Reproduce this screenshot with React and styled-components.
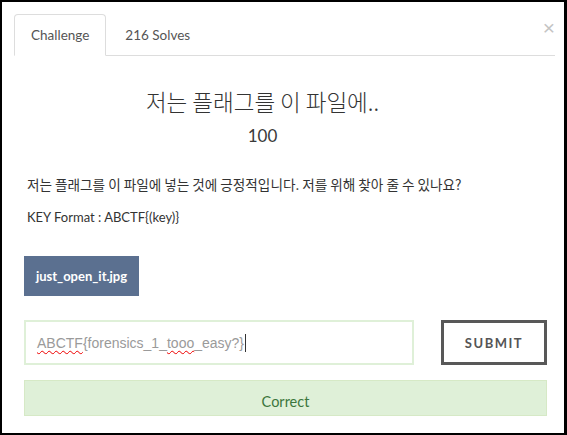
import styled, { createGlobalStyle } from 'styled-components';

const Global = createGlobalStyle`
  html, body {
    margin: 0;
    padding: 0;
    background: #000;
  }
  body {
    font-family: Lato, "Noto Sans CJK KR", sans-serif;
  }
`;

const Frame = styled.div`
  box-sizing: border-box;
  width: 567px;
  height: 435px;
  border-style: solid;
  border-color: #000;
  border-width: 2px 3px 2px 2px;
  background: #fff;
  padding: 12px 9px 0 12px;
`;

const TabBar = styled.div`
  position: relative;
  display: flex;
  align-items: flex-end;
  gap: 2px;
  border-bottom: 1px solid #ddd;
  height: 41px;
`;

const Tab = styled.div`
  box-sizing: border-box;
  height: ${(p) => (p.$active ? '42px' : '41px')};
  margin-bottom: ${(p) => (p.$active ? '-1px' : '0')};
  padding: 0 16px;
  display: flex;
  align-items: center;
  font-size: 13.5px;
  color: #555;
  background: #fff;
  border: 1px solid ${(p) => (p.$active ? '#ddd' : 'transparent')};
  border-bottom-color: ${(p) => (p.$active ? '#fff' : 'transparent')};
  border-radius: 4px 4px 0 0;
`;

const Close = styled.span`
  position: absolute;
  right: 0;
  top: 3px;
  font-family: "Liberation Sans", sans-serif;
  font-size: 21px;
  line-height: 1;
  color: #c4c4c4;
`;

const Body = styled.div`
  padding: 0 8px 0 10px;
`;

const Heading = styled.div`
  text-align: center;
  padding-right: 46px;
  padding-top: 30px;
`;

const Title = styled.h2`
  margin: 0;
  font-family: "Noto Sans CJK KR", sans-serif;
  font-weight: 300;
  font-size: 22.5px;
  line-height: 30px;
  color: #333;
`;

const Points = styled.div`
  margin-top: 9px;
  font-size: 17px;
  font-weight: 400;
  line-height: 22px;
  color: #3a3a3a;
`;

const Desc = styled.p`
  margin: 27px 0 0 3px;
  font-family: "Noto Sans CJK KR", sans-serif;
  font-size: 13.6px;
  line-height: 20px;
  color: #333;
`;

const Line = styled.p`
  margin: 13px 0 0 3px;
  font-size: 13px;
  line-height: 20px;
  color: #333;
`;

const FileButton = styled.div`
  display: flex;
  align-items: center;
  justify-content: center;
  margin-top: 29px;
  width: 115px;
  height: 40px;
  background: #5b7090;
  color: #fff;
  font-weight: 700;
  font-size: 13px;
`;

const FlagRow = styled.div`
  display: flex;
  gap: 27px;
  margin-top: 24px;
`;

const Field = styled.div`
  box-sizing: border-box;
  width: 390px;
  height: 45px;
  border: 2px solid #dff0d8;
  display: flex;
  align-items: center;
  padding-left: 11px;
  font-family: "Liberation Sans", Arial, sans-serif;
  font-size: 14px;
  color: #9a9a9a;
  white-space: pre;
`;

const Misspelled = styled.span`
  text-decoration: underline wavy #e00;
  text-decoration-thickness: 1px;
  text-underline-offset: 2px;
`;

const Caret = styled.span`
  display: inline-block;
  width: 1px;
  height: 18px;
  margin-left: 1px;
  background: #333;
`;

const Submit = styled.div`
  box-sizing: border-box;
  width: 106px;
  height: 45px;
  border: 3px solid #585858;
  display: flex;
  align-items: center;
  justify-content: center;
  color: #555;
  font-size: 13px;
  font-weight: 700;
  letter-spacing: 1.5px;
`;

const Alert = styled.div`
  box-sizing: border-box;
  margin-top: 15px;
  height: 36px;
  background: #dff0d8;
  border: 1px solid #d6e9c6;
  color: #3c763d;
  font-size: 14.5px;
  display: flex;
  align-items: center;
  justify-content: center;
  padding-top: 6px;
`;

export default function App() {
  return (
    <>
      <Global />
      <Frame>
        <TabBar>
          <Tab $active>Challenge</Tab>
          <Tab>216 Solves</Tab>
          <Close>×</Close>
        </TabBar>
        <Body>
          <Heading>
            <Title>저는 플래그를 이 파일에..</Title>
            <Points>100</Points>
          </Heading>
          <Desc>저는 플래그를 이 파일에 넣는 것에 긍정적입니다. 저를 위해 찾아 줄 수 있나요?</Desc>
          <Line>KEY Format : ABCTF{'{'}(key){'}'}</Line>
          <FileButton>just_open_it.jpg</FileButton>
          <FlagRow>
            <Field>
              <Misspelled>ABCTF</Misspelled>
              {'{forensics_1_'}
              <Misspelled>tooo</Misspelled>
              {'_easy?}'}
              <Caret />
            </Field>
            <Submit>SUBMIT</Submit>
          </FlagRow>
          <Alert>Correct</Alert>
        </Body>
      </Frame>
    </>
  );
}
